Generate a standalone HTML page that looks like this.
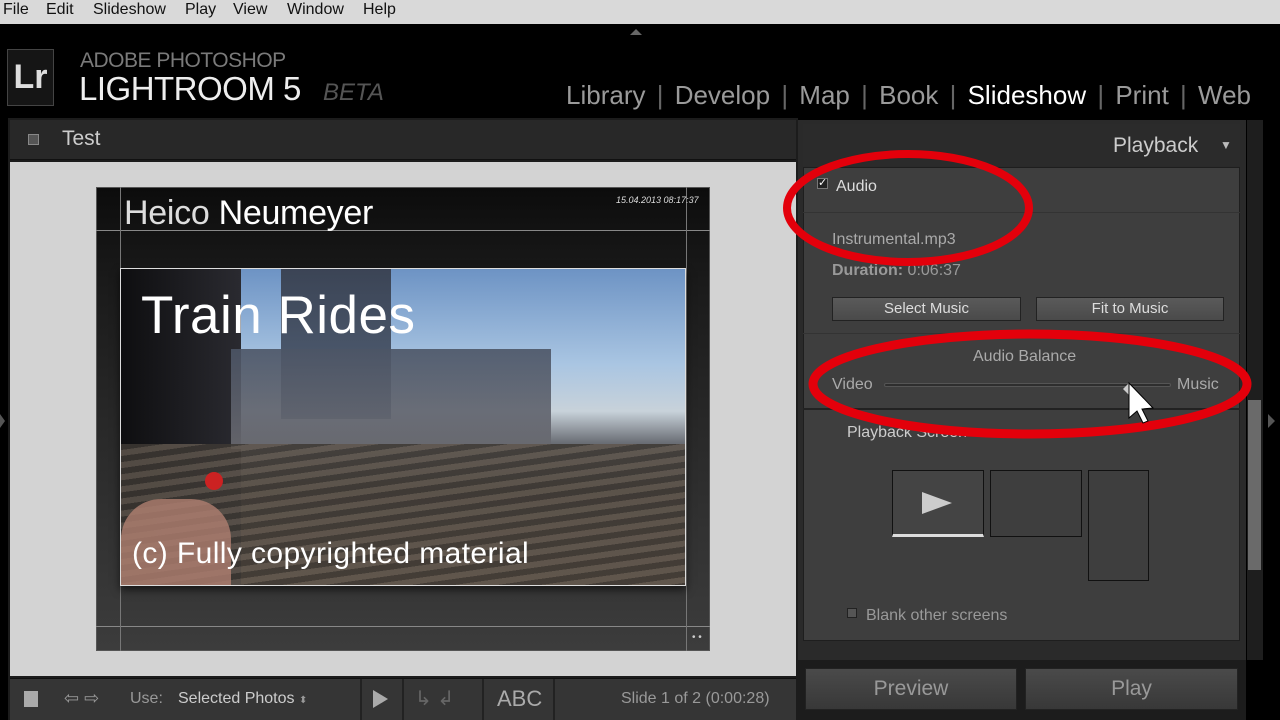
<!DOCTYPE html>
<html><head><meta charset="utf-8"><style>
*{margin:0;padding:0;box-sizing:border-box}
body{width:1280px;height:720px;overflow:hidden;background:#000;font-family:"Liberation Sans",sans-serif;position:relative}
.a{position:absolute}
.menu{left:0;top:0;width:1280px;height:24px;background:#d9d9d9;font-size:16px;color:#111}
.menu span{position:absolute;top:1px}
.nav{top:80px;font-size:26px;color:#9a9a9a;white-space:nowrap;word-spacing:4px}
.sep{color:#666}
.rp{color:#b8b8b8;font-size:16px}
.btn{background:linear-gradient(#5a5a5a,#4a4a4a);border:1px solid #222;color:#ddd;font-size:15px;text-align:center;line-height:22px}
</style></head><body>
<div class="a menu"><span style="left:3px">File</span><span style="left:46px">Edit</span><span style="left:93px">Slideshow</span><span style="left:185px">Play</span><span style="left:233px">View</span><span style="left:287px">Window</span><span style="left:363px">Help</span></div>
<div class="a" style="left:630px;top:29px;width:0;height:0;border-left:6px solid transparent;border-right:6px solid transparent;border-bottom:6px solid #666"></div>
<div class="a" style="left:7px;top:49px;width:47px;height:57px;border:1px solid #444;background:#151515;color:#ddd;font-size:34px;font-weight:bold;line-height:55px;text-align:center">Lr</div>
<div class="a" style="left:80px;top:49px;color:#7a7a7a;font-size:21px;letter-spacing:-0.5px">ADOBE PHOTOSHOP</div>
<div class="a" style="left:79px;top:70px;color:#eee;font-size:33px;letter-spacing:-0.5px">LIGHTROOM 5</div>
<div class="a" style="left:323px;top:79px;color:#555;font-size:24px;font-style:italic">BETA</div>
<div class="a nav" style="left:566px">Library <span class="sep">|</span> Develop <span class="sep">|</span> Map <span class="sep">|</span> Book <span class="sep">|</span> <span style="color:#fff">Slideshow</span> <span class="sep">|</span> Print <span class="sep">|</span> Web</div>

<div class="a" style="left:8px;top:118px;width:790px;height:602px;background:#1c1c1c"></div>
<div class="a" style="left:10px;top:120px;width:786px;height:40px;background:#282828;border-bottom:1px solid #111"></div>
<div class="a" style="left:28px;top:134px;width:11px;height:11px;border:1px solid #888;background:#555"></div>
<div class="a" style="left:62px;top:127px;color:#ccc;font-size:21px">Test</div>
<div class="a" style="left:10px;top:162px;width:786px;height:514px;background:#d3d3d3"></div>
<!-- slide -->
<div class="a" style="left:96px;top:187px;width:614px;height:464px;background:linear-gradient(#0c0c0c 0%,#1a1a1a 20%,#2c2c2c 60%,#3c3c3c 100%);border:1px solid #555"></div>
<div class="a" style="left:96px;top:230px;width:614px;height:1px;background:#888"></div>
<div class="a" style="left:96px;top:626px;width:614px;height:1px;background:#888"></div>
<div class="a" style="left:120px;top:187px;width:1px;height:464px;background:#777"></div>
<div class="a" style="left:686px;top:187px;width:1px;height:464px;background:#777"></div>
<div class="a" style="left:124px;top:194px;color:#ddd;font-size:34px;letter-spacing:-0.3px">Heico <span style="color:#fff">Neumeyer</span></div>
<div class="a" style="left:616px;top:195px;color:#ddd;font-size:9px;font-style:italic">15.04.2013 08:17:37</div>
<div class="a" style="left:692px;top:632px;color:#ccc;font-size:10px">• •</div>
<div class="a" style="left:120px;top:268px;width:566px;height:318px;overflow:hidden;border:1px solid #ddd;box-shadow:0 4px 8px rgba(0,0,0,.6);background:linear-gradient(180deg,#6d93c4 0%,#a9c5e2 30%,#c8d2da 45%,#6a6e75 55%,#4a4642 70%,#5e5248 85%,#6a5a4c 100%)">
 <div class="a" style="left:0;top:0;width:120px;height:318px;background:linear-gradient(90deg,#0e0e10,#2a2a30)"></div>
 <div class="a" style="left:160px;top:0;width:110px;height:150px;background:linear-gradient(#3b4455,#55647a)"></div>
 <div class="a" style="left:110px;top:80px;width:320px;height:100px;background:linear-gradient(#4c5566,#6a6a70);opacity:.9"></div>
 <div class="a" style="left:0;top:175px;width:566px;height:143px;background:repeating-linear-gradient(172deg,#3d3833 0 6px,#5e554c 6px 12px);opacity:.85"></div>
 <div class="a" style="left:0;top:230px;width:110px;height:88px;background:#b08070;border-radius:40px 40px 0 0;opacity:.8"></div>
 <div class="a" style="left:84px;top:203px;width:18px;height:18px;border-radius:50%;background:#c22"></div>
 <div class="a" style="left:20px;top:16px;color:#fff;font-size:53px;letter-spacing:0.5px">Train Rides</div>
 <div class="a" style="left:11px;top:268px;color:#fff;font-size:30px;letter-spacing:0.4px">(c) Fully copyrighted material</div>
</div>
<!-- toolbar -->
<div class="a" style="left:10px;top:678px;width:786px;height:42px;background:#353535;border-top:1px solid #111"></div>
<div class="a" style="left:24px;top:691px;width:14px;height:16px;background:#aaa"></div>
<div class="a" style="left:64px;top:688px;color:#999;font-size:18px">⇦ ⇨</div>
<div class="a" style="left:130px;top:690px;color:#999;font-size:16px">Use:</div>
<div class="a" style="left:178px;top:690px;color:#ccc;font-size:16px">Selected Photos <span style="font-size:10px;color:#999">⬍</span></div>
<div class="a" style="left:373px;top:690px;width:0;height:0;border-top:9px solid transparent;border-bottom:9px solid transparent;border-left:15px solid #aaa"></div>
<div class="a" style="left:415px;top:686px;color:#666;font-size:20px">↳ ↲</div>
<div class="a" style="left:497px;top:686px;color:#aaa;font-size:22px">ABC</div>
<div class="a" style="left:621px;top:690px;color:#999;font-size:16px">Slide 1 of 2 (0:00:28)</div>
<div class="a" style="left:360px;top:679px;width:2px;height:41px;background:#222"></div>
<div class="a" style="left:402px;top:679px;width:2px;height:41px;background:#222"></div>
<div class="a" style="left:482px;top:679px;width:2px;height:41px;background:#222"></div>
<div class="a" style="left:553px;top:679px;width:2px;height:41px;background:#222"></div>

<!-- right panel -->
<div class="a" style="left:798px;top:120px;width:448px;height:540px;background:#2a2a2a"></div>
<div class="a" style="left:803px;top:124px;width:437px;height:42px;background:#2b2b2b"></div>
<div class="a" style="left:1113px;top:134px;color:#ccc;font-size:21px">Playback</div>
<div class="a" style="left:1220px;top:138px;color:#bbb;font-size:12px">▼</div>
<div class="a" style="left:803px;top:167px;width:437px;height:474px;background:#3e3e3e;border:1px solid #1e1e1e"></div>
<div class="a" style="left:803px;top:212px;width:437px;height:1px;background:#333"></div>
<div class="a" style="left:803px;top:333px;width:437px;height:1px;background:#333"></div>
<div class="a" style="left:803px;top:408px;width:437px;height:2px;background:#222"></div>
<div class="a" style="left:817px;top:178px;width:11px;height:11px;background:#222;border:1px solid #777;color:#fff;font-size:11px;line-height:9px">✓</div>
<div class="a rp" style="left:836px;top:178px;color:#ddd">Audio</div>
<div class="a rp" style="left:832px;top:231px;color:#aaa">Instrumental.mp3</div>
<div class="a rp" style="left:832px;top:262px;color:#999"><b>Duration:</b> 0:06:37</div>
<div class="a btn" style="left:832px;top:297px;width:189px;height:24px">Select Music</div>
<div class="a btn" style="left:1036px;top:297px;width:188px;height:24px">Fit to Music</div>
<div class="a rp" style="left:973px;top:348px;color:#aaa">Audio Balance</div>
<div class="a rp" style="left:832px;top:376px;color:#aaa">Video</div>
<div class="a rp" style="left:1177px;top:376px;color:#aaa">Music</div>
<div class="a" style="left:884px;top:383px;width:287px;height:4px;background:#2e2e2e;border:1px solid #555;border-radius:2px"></div>
<div class="a rp" style="left:847px;top:424px;color:#ccc">Playback Screen</div>
<div class="a" style="left:892px;top:470px;width:92px;height:67px;border:1px solid #111;background:#444;border-bottom:3px solid #ddd"></div>
<div class="a" style="left:922px;top:492px;width:0;height:0;border-top:11px solid transparent;border-bottom:11px solid transparent;border-left:30px solid #ccc"></div>
<div class="a" style="left:990px;top:470px;width:92px;height:67px;border:1px solid #111"></div>
<div class="a" style="left:1088px;top:470px;width:61px;height:111px;border:1px solid #111"></div>
<div class="a" style="left:847px;top:608px;width:10px;height:10px;border:1px solid #222;background:#555"></div>
<div class="a rp" style="left:866px;top:607px;color:#999">Blank other screens</div>
<div class="a" style="left:1247px;top:120px;width:16px;height:540px;background:#1e1e1e"></div>
<div class="a" style="left:1248px;top:400px;width:13px;height:170px;background:#6a6a6a"></div>
<div class="a" style="left:1268px;top:414px;width:0;height:0;border-top:7px solid transparent;border-bottom:7px solid transparent;border-left:7px solid #555"></div>
<div class="a" style="left:0;top:414px;width:0;height:0;border-top:7px solid transparent;border-bottom:7px solid transparent;border-left:5px solid #555"></div>
<div class="a" style="left:798px;top:660px;width:448px;height:60px;background:#1c1c1c"></div>
<div class="a btn" style="left:805px;top:668px;width:212px;height:42px;line-height:40px;font-size:21px;color:#999;background:linear-gradient(#4a4a4a,#383838)">Preview</div>
<div class="a btn" style="left:1025px;top:668px;width:213px;height:42px;line-height:40px;font-size:21px;color:#999;background:linear-gradient(#4a4a4a,#383838)">Play</div>

<svg class="a" style="left:0;top:0" width="1280" height="720">
<ellipse cx="908" cy="208" rx="121" ry="54" fill="none" stroke="#e3000b" stroke-width="8"/>
<ellipse cx="1030" cy="384" rx="217" ry="50" fill="none" stroke="#e3000b" stroke-width="9"/>
<path d="M1129 383l6 6-6 6-6-6z" fill="#ccc"/>
<path d="M1129 383v35l8-7 6 12 5-2-6-12 11-1z" fill="#fff" stroke="#000" stroke-width="1"/>
</svg>
</body></html>
